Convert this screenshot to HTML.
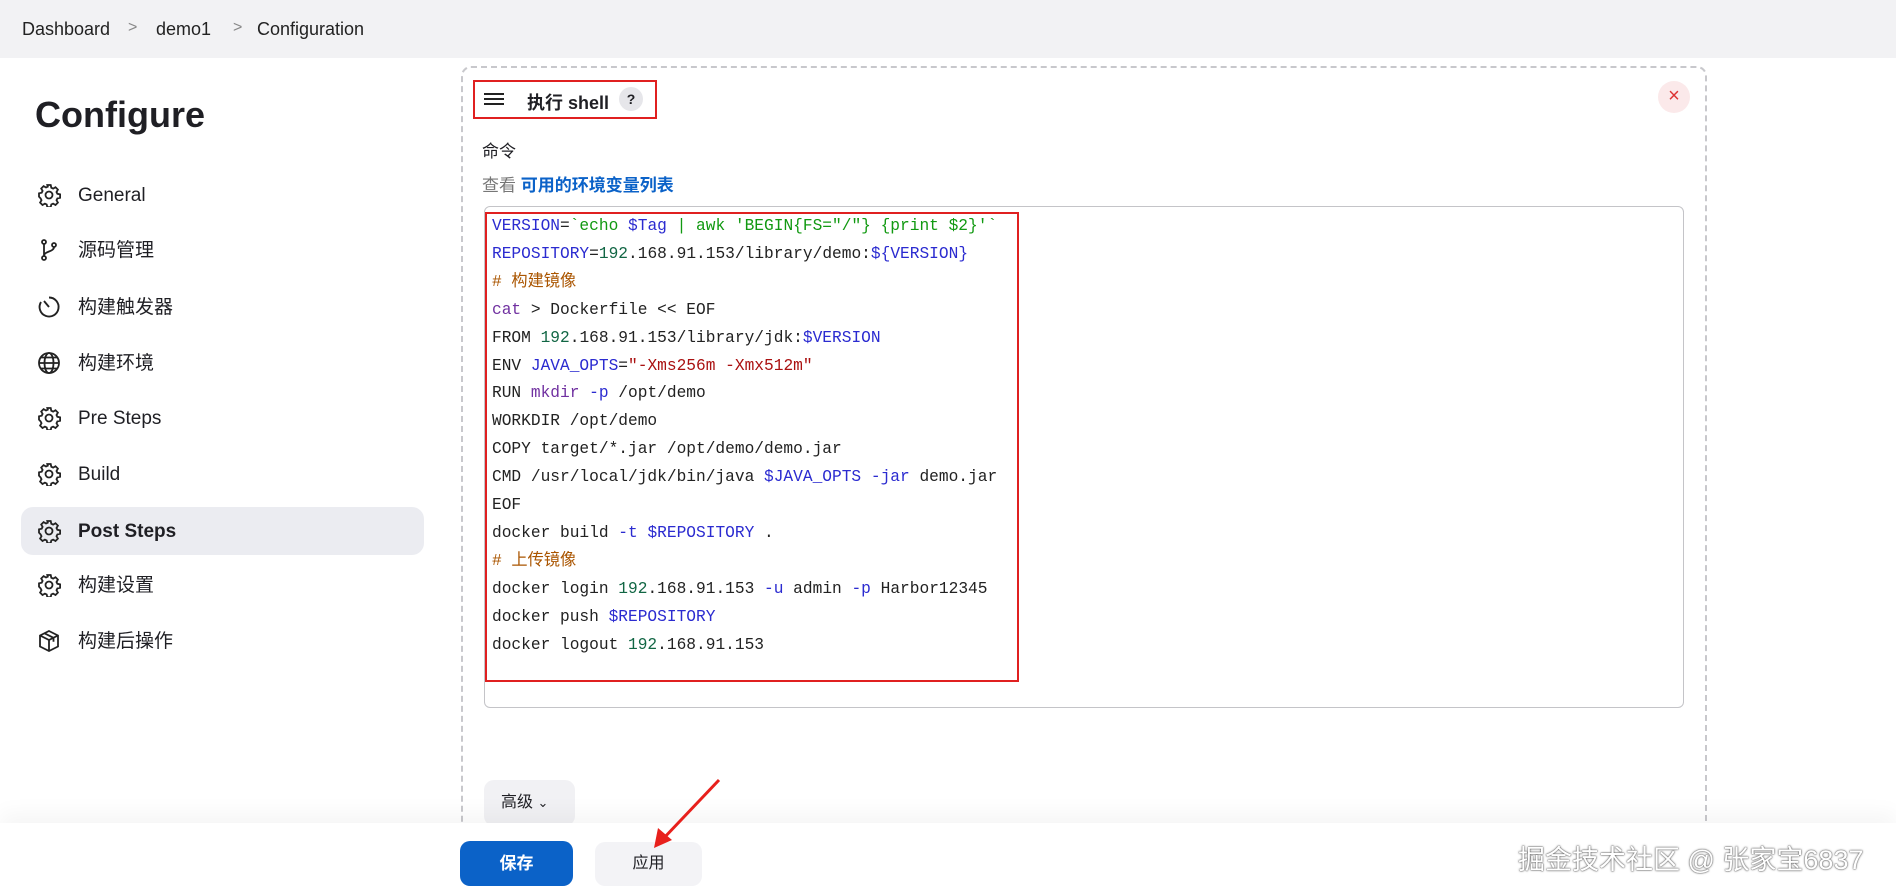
<!DOCTYPE html>
<html><head><meta charset="utf-8">
<style>
*{box-sizing:border-box;margin:0;padding:0}
html,body{width:1896px;height:892px;overflow:hidden}
body{background:#fff;font-family:"Liberation Sans","Noto Sans CJK SC",sans-serif;color:#1f1f24;position:relative}
.hdr{position:absolute;left:0;top:0;width:1896px;height:58px;background:#f2f2f4}
.bc{position:absolute;top:19px;font-size:18px;color:#222}
.sep{position:absolute;top:19px;font-size:16px;color:#888}
h1{position:absolute;left:35px;top:94px;font-size:36px;font-weight:bold}
.item{position:absolute;left:21px;width:403px;height:48px;border-radius:12px;font-size:19px}
.item svg{position:absolute;left:16px;top:12px}
.item span{position:absolute;left:57px;top:13px;line-height:24px}
.act{background:#ebecf1;font-weight:bold}
.box{position:absolute;left:461px;top:66px;width:1246px;height:840px;border:2px dashed #c8c8cc;border-radius:10px}
.red{position:absolute;border:2.5px solid #e02020}
pre{font-family:"Liberation Mono","Noto Sans CJK SC",monospace;font-size:16.2px;line-height:27.9px;color:#222}
.b{color:#1a1aa6}.g{color:#116644}.k{color:#2b2bd0}.s{color:#a11}.c{color:#aa5500}.p{color:#7030a0}.gr{color:#119911}
</style></head><body>
<div class="hdr"></div>
<div class="bc" style="left:22px">Dashboard</div>
<div class="sep" style="left:128px">&gt;</div>
<div class="bc" style="left:156px">demo1</div>
<div class="sep" style="left:233px">&gt;</div>
<div class="bc" style="left:257px">Configuration</div>
<h1>Configure</h1>

<svg width="0" height="0" style="position:absolute"><defs>
<g id="gear" fill="none" stroke="#222" stroke-width="1.8"><path d="M10.3 2h3.4l.6 2.7 1.8.9 2.4-1.4 2.4 2.4-1.4 2.4.9 1.8 2.7.6v3.4l-2.7.6-.9 1.8 1.4 2.4-2.4 2.4-2.4-1.4-1.8.9-.6 2.7h-3.4l-.6-2.7-1.8-.9-2.4 1.4-2.4-2.4 1.4-2.4-.9-1.8L2 13.7v-3.4l2.7-.6.9-1.8-1.4-2.4 2.4-2.4 2.4 1.4 1.8-.9z"/><circle cx="12" cy="12" r="3.5"/></g>
</defs></svg>

<div class="item" style="top:171px"><svg width="24" height="24"><use href="#gear"/></svg><span>General</span></div>
<div class="item" style="top:226px"><svg width="24" height="24" fill="none" stroke="#222" stroke-width="1.8"><circle cx="7" cy="4" r="2"/><circle cx="7" cy="20" r="2"/><circle cx="17" cy="7" r="2"/><path d="M7 6v12M17 9c0 5-10 4-10 9"/></svg><span>源码管理</span></div>
<div class="item" style="top:283px"><svg width="24" height="24" fill="none" stroke="#222" stroke-width="1.9"><path d="M12 2.5A9.5 9.5 0 1 1 4 7"/><path d="M12 12 7 6"/></svg><span>构建触发器</span></div>
<div class="item" style="top:339px"><svg width="24" height="24" fill="none" stroke="#222" stroke-width="1.8"><circle cx="12" cy="12" r="10"/><ellipse cx="12" cy="12" rx="4.5" ry="10"/><path d="M2 12h20M4 6.5h16M4 17.5h16"/></svg><span>构建环境</span></div>
<div class="item" style="top:394px"><svg width="24" height="24"><use href="#gear"/></svg><span>Pre Steps</span></div>
<div class="item" style="top:450px"><svg width="24" height="24"><use href="#gear"/></svg><span>Build</span></div>
<div class="item act" style="top:507px"><svg width="24" height="24"><use href="#gear"/></svg><span>Post Steps</span></div>
<div class="item" style="top:561px"><svg width="24" height="24"><use href="#gear"/></svg><span>构建设置</span></div>
<div class="item" style="top:617px"><svg width="24" height="24" fill="none" stroke="#222" stroke-width="1.8"><path d="M12 2 21 6.5v11L12 22 3 17.5v-11z"/><path d="M3 6.5 12 11l9-4.5M12 11v11M7.5 4.3l9 4.5v4"/></svg><span>构建后操作</span></div>

<div class="box"></div>
<div class="red" style="left:473px;top:80px;width:184px;height:39px"></div>
<svg style="position:absolute;left:484px;top:92px" width="20" height="14"><path d="M0 2h20M0 7h20M0 12h20" stroke="#222" stroke-width="2"/></svg>
<div style="position:absolute;left:527px;top:89px;font-size:18px;font-weight:bold">执行 shell</div>
<div style="position:absolute;left:619px;top:87px;width:24px;height:24px;border-radius:12px;background:#e6e6ea;font-size:14px;font-weight:bold;text-align:center;line-height:24px">?</div>
<div style="position:absolute;left:1658px;top:81px;width:32px;height:32px;border-radius:16px;background:#fbe9ea;color:#d33;text-align:center;line-height:30px;font-size:20px">×</div>
<div style="position:absolute;left:482px;top:137px;font-size:17px">命令</div>
<div style="position:absolute;left:482px;top:171px;font-size:17px;color:#777">查看 <b style="color:#0b62c8">可用的环境变量列表</b></div>

<div style="position:absolute;left:484px;top:206px;width:1200px;height:502px;border:1.5px solid #c4c4c8;border-radius:6px"></div>
<div class="red" style="left:485px;top:212px;width:534px;height:470px"></div>
<pre style="position:absolute;left:492px;top:213px"><span class="k">VERSION</span>=<span class="gr">`echo</span> <span class="k">$Tag</span> <span class="gr">| awk 'BEGIN{FS="/"} {print $2}'`</span>
<span class="k">REPOSITORY</span>=<span class="g">192</span>.168.91.153/library/demo:<span class="k">${VERSION}</span>
<span class="c"># 构建镜像</span>
<span class="p">cat</span> &gt; Dockerfile &lt;&lt; EOF
FROM <span class="g">192</span>.168.91.153/library/jdk:<span class="k">$VERSION</span>
ENV <span class="k">JAVA_OPTS</span>=<span class="s">"-Xms256m -Xmx512m"</span>
RUN <span class="p">mkdir</span> <span class="k">-p</span> /opt/demo
WORKDIR /opt/demo
COPY target/*.jar /opt/demo/demo.jar
CMD /usr/local/jdk/bin/java <span class="k">$JAVA_OPTS</span> <span class="k">-jar</span> demo.jar
EOF
docker build <span class="k">-t</span> <span class="k">$REPOSITORY</span> .
<span class="c"># 上传镜像</span>
docker login <span class="g">192</span>.168.91.153 <span class="k">-u</span> admin <span class="k">-p</span> Harbor12345
docker push <span class="k">$REPOSITORY</span>
docker logout <span class="g">192</span>.168.91.153</pre>

<div style="position:absolute;left:484px;top:780px;width:91px;height:46px;border-radius:10px;background:#f1f1f4;font-size:16px;line-height:46px;padding-left:17px">高级 <span style="font-size:13px">&#8964;</span></div>
<div style="position:absolute;left:0;top:823px;width:1896px;height:69px;background:#fff;box-shadow:0 -10px 20px rgba(0,0,0,0.04)"></div>
<div style="position:absolute;left:460px;top:841px;width:113px;height:45px;border-radius:10px;background:#0b62c8;color:#fff;font-weight:bold;font-size:17px;text-align:center;line-height:45px">保存</div>
<div style="position:absolute;left:595px;top:842px;width:107px;height:44px;border-radius:10px;background:#f3f3f6;font-size:16px;text-align:center;line-height:44px">应用</div>
<svg style="position:absolute;left:650px;top:776px" width="80" height="76"><path d="M69 4 12 64" stroke="#e8201c" stroke-width="3"/><path d="M4 72 8 52 22 64z" fill="#e8201c"/></svg>
<div style="position:absolute;left:1518px;top:838px;font-size:27px;color:#fff;white-space:nowrap;text-shadow:0 0 2px #555,0 0 1px #333">掘金技术社区 @ 张家宝6837</div>
</body></html>
